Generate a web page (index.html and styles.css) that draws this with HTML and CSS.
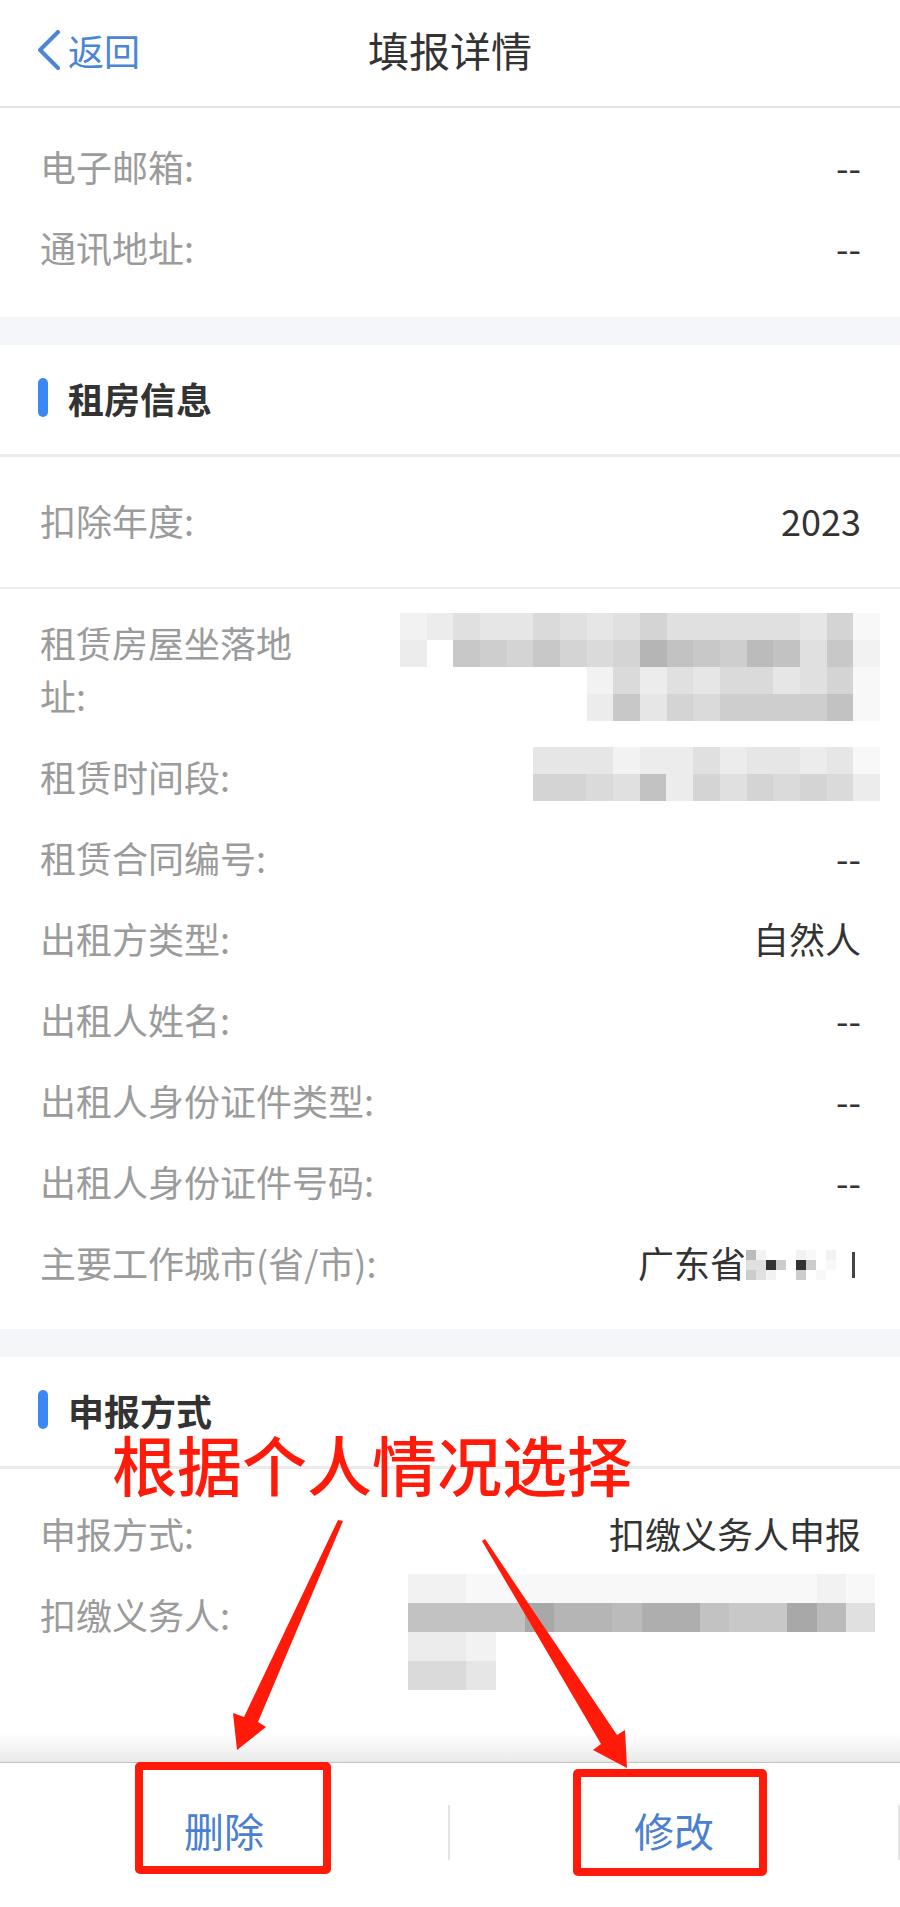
FILE: index.html
```html
<!DOCTYPE html>
<html lang="zh-CN">
<head>
<meta charset="utf-8">
<title>填报详情</title>
<link rel="stylesheet" href="styles.css">
</head>
<body>
<div class="page">
  <header class="nav">
    <div class="back">
      <svg class="back-icon" viewBox="0 0 22 40" aria-hidden="true"><polyline points="20,2 2,20 20,38" fill="none" stroke="#4a86d4" stroke-width="4" stroke-linecap="round" stroke-linejoin="round"/></svg>
      <span>返回</span>
    </div>
    <div class="title">填报详情</div>
    <div class="nav-side"></div>
  </header>

  <section class="card card-top">
    <div class="row"><span class="label">电子邮箱:</span><span class="value">--</span></div>
    <div class="row"><span class="label">通讯地址:</span><span class="value">--</span></div>
  </section>

  <div class="band"></div>

  <section class="card">
    <div class="sec-head"><span class="sec-bar"></span><span class="sec-title">租房信息</span></div>
    <div class="deduct">
      <div class="row"><span class="label">扣除年度:</span><span class="value">2023</span></div>
    </div>
    <div class="list">
      <div class="row">
        <span class="label label-wrap">租赁房屋坐落地址:</span>
        <div class="value">
          <div class="mosaic mz-addr">
            <i class="s-f2"></i><i class="s-ec"></i><i class="s-e0"></i><i class="s-e6"></i><i class="s-e6"></i><i class="s-da"></i><i class="s-e0"></i><i class="s-e6"></i><i class="s-e0"></i><i class="s-d4"></i><i class="s-e0"></i><i class="s-e0"></i><i class="s-e0"></i><i class="s-e0"></i><i class="s-e0"></i><i class="s-e6"></i><i class="s-d4"></i><i class="s-f8"></i>
            <i class="s-ec"></i><i class="s-ff"></i><i class="s-c8"></i><i class="s-ce"></i><i class="s-d4"></i><i class="s-c8"></i><i class="s-d4"></i><i class="s-da"></i><i class="s-d4"></i><i class="s-b5"></i><i class="s-c2"></i><i class="s-c8"></i><i class="s-ce"></i><i class="s-bb"></i><i class="s-c2"></i><i class="s-e0"></i><i class="s-c8"></i><i class="s-f2"></i>
            <i class="s-ff"></i><i class="s-ff"></i><i class="s-ff"></i><i class="s-ff"></i><i class="s-ff"></i><i class="s-ff"></i><i class="s-ff"></i><i class="s-f2"></i><i class="s-da"></i><i class="s-ec"></i><i class="s-e0"></i><i class="s-e6"></i><i class="s-da"></i><i class="s-da"></i><i class="s-e6"></i><i class="s-e0"></i><i class="s-d4"></i><i class="s-f8"></i>
            <i class="s-ff"></i><i class="s-ff"></i><i class="s-ff"></i><i class="s-ff"></i><i class="s-ff"></i><i class="s-ff"></i><i class="s-ff"></i><i class="s-ec"></i><i class="s-c8"></i><i class="s-e6"></i><i class="s-d4"></i><i class="s-da"></i><i class="s-ce"></i><i class="s-ce"></i><i class="s-ce"></i><i class="s-ce"></i><i class="s-c2"></i><i class="s-f8"></i>
          </div>
        </div>
      </div>
      <div class="row">
        <span class="label">租赁时间段:</span>
        <div class="value">
          <div class="mosaic mz-period">
            <i class="s-e6"></i><i class="s-e6"></i><i class="s-e6"></i><i class="s-f2"></i><i class="s-ec"></i><i class="s-ec"></i><i class="s-e0"></i><i class="s-ec"></i><i class="s-e6"></i><i class="s-e6"></i><i class="s-ec"></i><i class="s-e6"></i><i class="s-f8"></i>
            <i class="s-d4"></i><i class="s-d4"></i><i class="s-da"></i><i class="s-e0"></i><i class="s-c2"></i><i class="s-ec"></i><i class="s-d4"></i><i class="s-e0"></i><i class="s-d4"></i><i class="s-da"></i><i class="s-d4"></i><i class="s-da"></i><i class="s-ec"></i>
          </div>
        </div>
      </div>
      <div class="row"><span class="label">租赁合同编号:</span><span class="value">--</span></div>
      <div class="row"><span class="label">出租方类型:</span><span class="value">自然人</span></div>
      <div class="row"><span class="label">出租人姓名:</span><span class="value">--</span></div>
      <div class="row"><span class="label">出租人身份证件类型:</span><span class="value">--</span></div>
      <div class="row"><span class="label">出租人身份证件号码:</span><span class="value">--</span></div>
      <div class="row">
        <span class="label">主要工作城市(省/市):</span>
        <div class="value value-city">
          <span>广东省</span>
          <span class="mosaic mz-city">
            <i class="s-bb"></i><i class="s-f2"></i><i class="s-ff"></i><i class="s-ff"></i><i class="s-ff"></i><i class="s-f2"></i><i class="s-f8"></i><i class="s-ff"></i><i class="s-f2"></i><i class="s-ff"></i>
            <i class="s-e0"></i><i class="s-e0"></i><i class="s-33"></i><i class="s-cc"></i><i class="s-ff"></i><i class="s-33"></i><i class="s-cc"></i><i class="s-ff"></i><i class="s-f8"></i><i class="s-ff"></i>
            <i class="s-cc"></i><i class="s-e0"></i><i class="s-f2"></i><i class="s-ff"></i><i class="s-ff"></i><i class="s-cc"></i><i class="s-ff"></i><i class="s-f8"></i><i class="s-ff"></i><i class="s-ff"></i>
          </span>
          <span class="city-tail"><span class="city-stroke"></span></span>
        </div>
      </div>
    </div>
  </section>

  <div class="band"></div>

  <section class="card sec3">
    <div class="sec-head"><span class="sec-bar"></span><span class="sec-title">申报方式</span></div>
    <div class="list3">
      <div class="row"><span class="label">申报方式:</span><span class="value">扣缴义务人申报</span></div>
      <div class="row">
        <span class="label">扣缴义务人:</span>
        <div class="value">
          <div class="mosaic mz-agent">
            <i class="s-f2"></i><i class="s-f2"></i><i class="s-f8"></i><i class="s-f8"></i><i class="s-f8"></i><i class="s-f8"></i><i class="s-f8"></i><i class="s-f8"></i><i class="s-f8"></i><i class="s-f8"></i><i class="s-f8"></i><i class="s-f8"></i><i class="s-f8"></i><i class="s-f8"></i><i class="s-f2"></i><i class="s-f8"></i>
            <i class="s-c2"></i><i class="s-c2"></i><i class="s-c2"></i><i class="s-c2"></i><i class="s-a8"></i><i class="s-b5"></i><i class="s-b5"></i><i class="s-bb"></i><i class="s-ae"></i><i class="s-ae"></i><i class="s-c2"></i><i class="s-c8"></i><i class="s-c8"></i><i class="s-a8"></i><i class="s-bb"></i><i class="s-e0"></i>
            <i class="s-ec"></i><i class="s-ec"></i><i class="s-f2"></i><i class="s-ff"></i><i class="s-ff"></i><i class="s-ff"></i><i class="s-ff"></i><i class="s-ff"></i><i class="s-ff"></i><i class="s-ff"></i><i class="s-ff"></i><i class="s-ff"></i><i class="s-ff"></i><i class="s-ff"></i><i class="s-ff"></i><i class="s-ff"></i>
            <i class="s-da"></i><i class="s-da"></i><i class="s-e6"></i><i class="s-ff"></i><i class="s-ff"></i><i class="s-ff"></i><i class="s-ff"></i><i class="s-ff"></i><i class="s-ff"></i><i class="s-ff"></i><i class="s-ff"></i><i class="s-ff"></i><i class="s-ff"></i><i class="s-ff"></i><i class="s-ff"></i><i class="s-ff"></i>
          </div>
        </div>
      </div>
    </div>
  </section>

  <footer class="footer">
    <div class="btn">删除</div>
    <span class="sep"></span>
    <div class="btn">修改</div>
    <span class="sep"></span>
  </footer>

  <div class="annot">
    <svg class="annot-svg" viewBox="0 0 900 1907" aria-hidden="true">
      <polygon points="338,1520 343,1521 258,1722 266,1727 237,1750 233,1713 244,1717" fill="#ff1a0a"/>
      <polygon points="482,1541 485,1539 617,1735 625,1730 627,1768 593,1750 601,1744" fill="#ff1a0a"/>
    </svg>
    <div class="annot-text">根据个人情况选择</div>
    <div class="annot-box box-del"></div>
    <div class="annot-box box-edit"></div>
  </div>
</div>
</body>
</html>
```

FILE: styles.css
```css
* { box-sizing: border-box; }

body {
  margin: 0;
  background: #ffffff;
  font-family: "Noto Sans CJK SC", "Noto Sans", sans-serif;
}

.page {
  position: relative;
  width: 900px;
  height: 1907px;
  display: flex;
  flex-direction: column;
  overflow: hidden;
  background: #ffffff;
}

/* navigation bar */
.nav {
  height: 108px;
  flex: none;
  border-bottom: 2px solid #e3e3e3;
  display: grid;
  grid-template-columns: 1fr auto 1fr;
  align-items: center;
  padding: 0 38px 7px;
}

.back {
  display: flex;
  align-items: center;
  gap: 8px;
  color: #4a86d4;
  font-size: 36px;
  line-height: 1;
}

.back-icon {
  width: 22px;
  height: 40px;
}

.title {
  font-size: 41px;
  color: #333333;
  line-height: 1;
}

/* cards */
.card {
  background: #ffffff;
  flex: none;
}

.card-top {
  padding: 19px 0 28px;
}

.band {
  height: 28px;
  flex: none;
  background: #f5f6fa;
}

.sec-head {
  height: 112px;
  border-bottom: 3px solid #ebebeb;
  display: flex;
  align-items: center;
  gap: 20px;
  padding: 0 0 4px 38px;
}

.sec-bar {
  width: 10px;
  height: 39px;
  border-radius: 5px;
  background: #3d87f3;
}

.sec-title {
  font-size: 36px;
  font-weight: 700;
  color: #333333;
}

.row {
  display: flex;
  justify-content: space-between;
  align-items: flex-start;
  padding: 13px 39px 15px 40px;
  font-size: 36px;
  line-height: 53px;
}

.label {
  flex: none;
  color: #9b9b9b;
  white-space: nowrap;
}

.label-wrap {
  white-space: normal;
  width: 270px;
}

.value {
  flex: 1;
  display: flex;
  justify-content: flex-end;
  color: #333333;
  text-align: right;
  white-space: nowrap;
}

.deduct {
  padding: 24px 0 25px;
  border-bottom: 2px solid #f0f0f0;
}

.list {
  padding: 14px 0 25px;
}

.sec3 {
  flex: 1;
}

.list3 {
  padding-top: 25px;
}

/* pixelated values */
.mosaic {
  display: grid;
}

.mosaic i {
  display: block;
}

.mz-addr {
  grid-template-columns: repeat(18, 1fr);
  grid-auto-rows: 27px;
  width: 480px;
  margin: -3px -19px 0 0;
}

.mz-period {
  grid-template-columns: repeat(13, 1fr);
  grid-auto-rows: 27px;
  width: 347px;
  margin: -3px -19px 0 0;
}

.mz-agent {
  grid-template-columns: repeat(16, 1fr);
  grid-auto-rows: 29px;
  width: 467px;
  margin: -14px -14px 0 0;
}

.value-city {
  align-items: center;
}

.mz-city {
  display: inline-grid;
  grid-template-columns: repeat(10, 10px);
  grid-auto-rows: 10px;
  margin-top: 4px;
}

.city-tail {
  display: flex;
  justify-content: center;
  width: 15px;
}

.city-stroke {
  width: 3px;
  height: 26px;
  margin-top: 4px;
  background: #444444;
}

.s-ff { background: #ffffff; }
.s-f8 { background: #f8f8f8; }
.s-f2 { background: #f2f2f2; }
.s-ec { background: #ececec; }
.s-e6 { background: #e6e6e6; }
.s-e0 { background: #e0e0e0; }
.s-da { background: #dadada; }
.s-d4 { background: #d4d4d4; }
.s-ce { background: #cecece; }
.s-cc { background: #cccccc; }
.s-c8 { background: #c8c8c8; }
.s-c2 { background: #c2c2c2; }
.s-bb { background: #bbbbbb; }
.s-b5 { background: #b5b5b5; }
.s-ae { background: #aeaeae; }
.s-a8 { background: #a8a8a8; }
.s-33 { background: #333333; }

/* bottom action bar */
.footer {
  position: relative;
  flex: none;
  height: 145px;
  border-top: 1px solid #d6d6d6;
  display: flex;
  align-items: center;
  background: #ffffff;
}

.footer::before {
  content: "";
  position: absolute;
  left: 0;
  right: 0;
  bottom: 100%;
  height: 30px;
  background: linear-gradient(rgba(0, 0, 0, 0), rgba(0, 0, 0, 0.09));
}

.btn {
  flex: 1;
  text-align: center;
  font-size: 40px;
  line-height: 1;
  color: #4a80d0;
  padding-bottom: 10px;
}

.sep {
  width: 2px;
  height: 55px;
  margin-bottom: 5px;
  background: #e4e4e4;
}

/* red annotation overlay */
.annot {
  position: absolute;
  left: 0;
  top: 0;
  width: 900px;
  height: 1907px;
  pointer-events: none;
}

.annot-svg {
  position: absolute;
  left: 0;
  top: 0;
  width: 900px;
  height: 1907px;
}

.annot-text {
  position: absolute;
  left: 112px;
  top: 1431px;
  font-size: 65px;
  line-height: 1;
  font-weight: 500;
  color: #ff1a0a;
  white-space: nowrap;
}

.annot-box {
  position: absolute;
  border: 8px solid #ff1a0a;
  border-radius: 5px;
}

.box-del {
  left: 135px;
  top: 1762px;
  width: 196px;
  height: 112px;
}

.box-edit {
  left: 573px;
  top: 1769px;
  width: 194px;
  height: 107px;
}
```
